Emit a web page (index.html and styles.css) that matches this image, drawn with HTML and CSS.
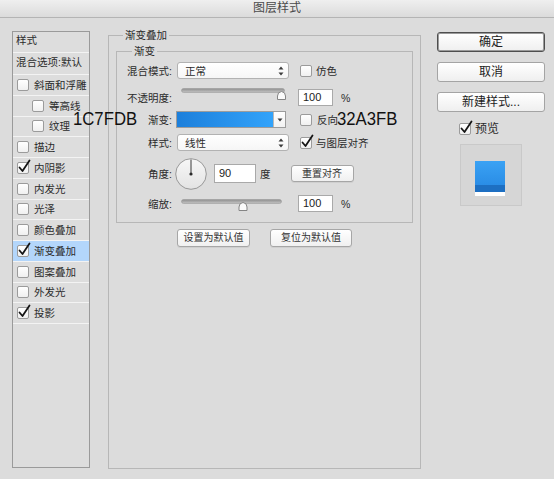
FILE: index.html
```html
<!DOCTYPE html>
<html lang="zh">
<head>
<meta charset="utf-8">
<title>图层样式</title>
<link rel="stylesheet" href="styles.css">
</head>
<body>
<div class="window">
  <div class="titlebar">图层样式</div>
  <div class="main">
    <div class="sidebar">
      <div class="side-head">样式</div>
      <div class="side-blend">混合选项:默认</div>
      <div class="side-row"><span class="cb"></span>斜面和浮雕</div>
      <div class="side-row sub"><span class="cb"></span>等高线</div>
      <div class="side-row sub"><span class="cb"></span>纹理</div>
      <div class="side-row"><span class="cb"></span>描边</div>
      <div class="side-row"><span class="cb on"><svg class="tick" viewBox="0 0 14 14" width="14" height="14"><path d="M2.5 7.5 L5.5 11 L12.5 0.5"/></svg></span>内阴影</div>
      <div class="side-row"><span class="cb"></span>内发光</div>
      <div class="side-row"><span class="cb"></span>光泽</div>
      <div class="side-row"><span class="cb"></span>颜色叠加</div>
      <div class="side-row selected"><span class="cb on"><svg class="tick" viewBox="0 0 14 14" width="14" height="14"><path d="M2.5 7.5 L5.5 11 L12.5 0.5"/></svg></span>渐变叠加</div>
      <div class="side-row"><span class="cb"></span>图案叠加</div>
      <div class="side-row"><span class="cb"></span>外发光</div>
      <div class="side-row"><span class="cb on"><svg class="tick" viewBox="0 0 14 14" width="14" height="14"><path d="M2.5 7.5 L5.5 11 L12.5 0.5"/></svg></span>投影</div>
    </div>

    <fieldset class="group outer">
      <legend>渐变叠加</legend>
      <fieldset class="group inner">
        <legend>渐变</legend>
        <div class="row r1">
          <span class="lbl">混合模式:</span>
          <div class="select s-blend"><span>正常</span><svg class="updown" viewBox="0 0 6 10" width="6" height="10"><path d="M3 0.5 L5.5 3.5 L0.5 3.5 Z M3 9.5 L5.5 6.5 L0.5 6.5 Z"/></svg></div>
          <span class="cb c-after"></span><span class="cbtext">仿色</span>
        </div>
        <div class="row r2">
          <span class="lbl">不透明度:</span>
          <svg class="slider sl1" viewBox="0 0 106 12" width="106" height="12">
            <defs><linearGradient id="trk" x1="0" y1="0" x2="0" y2="1"><stop offset="0" stop-color="#8d8d8d"/><stop offset="1" stop-color="#c4c4c4"/></linearGradient></defs>
            <rect x="0.5" y="0.5" width="103" height="4" rx="2" fill="url(#trk)" stroke="#9a9a9a" stroke-width="0.6"/>
            <path d="M96.5 11.5 L96.5 8 Q96.5 4 100.5 3.5 Q104.5 4 104.5 8 L104.5 11.5 Z" fill="#fbfbfb" stroke="#858585" stroke-width="1"/>
          </svg>
          <div class="num n-op">100</div><span class="unit">%</span>
        </div>
        <div class="row r3">
          <span class="lbl">渐变:</span>
          <div class="grad"><div class="bar"></div><div class="drop"><svg viewBox="0 0 6 4" width="6" height="4"><path d="M0.5 0.5 L5.5 0.5 L3 3.5 Z"/></svg></div></div>
          <span class="cb c-after2"></span><span class="cbtext t2">反向</span>
        </div>
        <div class="row r4">
          <span class="lbl">样式:</span>
          <div class="select s-blend"><span>线性</span><svg class="updown" viewBox="0 0 6 10" width="6" height="10"><path d="M3 0.5 L5.5 3.5 L0.5 3.5 Z M3 9.5 L5.5 6.5 L0.5 6.5 Z"/></svg></div>
          <span class="cb on c-after"><svg class="tick" viewBox="0 0 14 14" width="14" height="14"><path d="M2.5 7.5 L5.5 11 L12.5 0.5"/></svg></span><span class="cbtext">与图层对齐</span>
        </div>
        <div class="row r5">
          <span class="lbl">角度:</span>
          <svg class="dial" viewBox="0 0 32 32" width="32" height="32">
            <defs><linearGradient id="dg" x1="0" y1="0" x2="0" y2="1"><stop offset="0" stop-color="#f7f7f7"/><stop offset="1" stop-color="#e3e3e3"/></linearGradient></defs>
            <circle cx="16" cy="16" r="15.3" fill="url(#dg)" stroke="#8e8e8e" stroke-width="0.9"/>
            <line x1="16" y1="16" x2="16" y2="1.5" stroke="#3a3a3a" stroke-width="1"/>
            <circle cx="16" cy="16" r="1.6" fill="#2a2a2a"/>
          </svg>
          <div class="num n-ang">90</div><span class="unit u-deg">度</span>
          <div class="btn b-reset">重置对齐</div>
        </div>
        <div class="row r6">
          <span class="lbl">缩放:</span>
          <svg class="slider sl2" viewBox="0 0 106 12" width="106" height="12">
            <rect x="0.5" y="0.5" width="100" height="4" rx="2" fill="url(#trk)" stroke="#9a9a9a" stroke-width="0.6"/>
            <path d="M58 11.5 L58 8 Q58 4 62 3.5 Q66 4 66 8 L66 11.5 Z" fill="#fbfbfb" stroke="#858585" stroke-width="1"/>
          </svg>
          <div class="num n-sc">100</div><span class="unit">%</span>
        </div>
      </fieldset>
      <div class="defaults">
        <div class="btn b-def1">设置为默认值</div>
        <div class="btn b-def2">复位为默认值</div>
      </div>
    </fieldset>

    <div class="actions">
      <div class="abtn primary">确定</div>
      <div class="abtn">取消</div>
      <div class="abtn">新建样式...</div>
      <div class="preview-check"><span class="cb on"><svg class="tick" viewBox="0 0 14 14" width="14" height="14"><path d="M2.5 7.5 L5.5 11 L12.5 0.5"/></svg></span><span class="ptext">预览</span></div>
      <div class="preview"><div class="swatch"></div></div>
    </div>
  </div>
  <div class="note n1">1C7FDB</div>
  <div class="note n2">32A3FB</div>
</div>
</body>
</html>
```
FILE: styles.css
```css
html, body {
  margin: 0;
  padding: 0;
}
body {
  width: 554px;
  height: 479px;
  overflow: hidden;
  background: #dcdcdc;
  font-family: "Liberation Sans", "Noto Sans CJK SC", sans-serif;
  font-size: 10.5px;
  color: #2b2b2b;
}
.window {
  position: relative;
  width: 554px;
  height: 479px;
  background: #dcdcdc;
}
.titlebar {
  height: 17px;
  border-bottom: 1px solid #b4b4b4;
  background: linear-gradient(#efefef, #dbdbdb);
  text-align: center;
  font-size: 12px;
  line-height: 17px;
  color: #4a4a4a;
}
.main {
  display: flex;
  align-items: flex-start;
  padding-top: 13px;
}

/* sidebar */
.sidebar {
  margin-left: 12px;
  width: 78px;
  height: 437px;
  box-sizing: border-box;
  border: 1px solid #9a9a9a;
  background: #dddddd;
}
.side-head {
  height: 21px;
  box-sizing: border-box;
  border-bottom: 1px solid #f3f3f3;
  padding: 1px 0 0 3px;
  line-height: 14px;
}
.side-blend {
  height: 22px;
  box-sizing: border-box;
  border-bottom: 1px solid #f3f3f3;
  padding: 2px 0 0 3px;
  line-height: 14px;
}
.side-row {
  height: 20.75px;
  box-sizing: border-box;
  border-bottom: 1px solid #f3f3f3;
  display: flex;
  align-items: center;
  gap: 5px;
  padding-left: 4px;
  line-height: 14px;
}
.side-row.sub {
  padding-left: 19px;
}
.side-row.selected {
  background: #b3d6fb;
}

/* checkbox */
.cb {
  position: relative;
  flex: none;
  display: inline-block;
  width: 12px;
  height: 12px;
  box-sizing: border-box;
  border: 1px solid #9b9b9b;
  border-radius: 2px;
  background: linear-gradient(#ffffff, #f0f0f0);
}
.tick {
  position: absolute;
  left: -1px;
  top: -3px;
  overflow: visible;
}
.tick path {
  fill: none;
  stroke: #151515;
  stroke-width: 1.8;
  stroke-linecap: round;
  stroke-linejoin: round;
}

/* fieldsets */
fieldset.group {
  margin: 0;
  min-width: 0;
  box-sizing: border-box;
  border: 1px solid #b7b7b7;
}
fieldset.group legend {
  padding: 0 2px;
  line-height: 14px;
  font-size: 10.5px;
}
fieldset.outer {
  margin: -3px 0 0 18px;
  width: 313px;
  height: 441px;
  padding: 2px 7px 0 7px;
}
fieldset.outer > legend {
  margin-left: 7px;
}
fieldset.inner {
  width: 297px;
  height: 179px;
  padding: 4px 9px 0 9px;
}
fieldset.inner > legend {
  margin-left: 6px;
}

/* form rows */
.row {
  display: flex;
  align-items: center;
  height: 17px;
  margin-top: 5px;
}
.row.r1 { margin-top: 0; }
.row.r2 { margin-top: 10px; }
.row.r4 { margin-top: 6px; }
.row.r5 { height: 34px; }
.lbl {
  flex: none;
  width: 46px;
  text-align: right;
  white-space: nowrap;
}
.select {
  flex: none;
  width: 112px;
  height: 17px;
  box-sizing: border-box;
  margin-left: 5px;
  border: 1px solid #b2b2b2;
  border-radius: 3px;
  background: linear-gradient(#ffffff, #f6f6f6);
  display: flex;
  align-items: center;
  justify-content: space-between;
  padding: 0 4px 0 7px;
  line-height: 14px;
}
.updown path { fill: #3c3c3c; }
.c-after { margin-left: 11px; }
.c-after2 { margin-left: 14px; }
.cbtext { margin-left: 4px; white-space: nowrap; }
.cbtext.t2 { margin-left: 5px; }

.slider { flex: none; align-self: flex-start; overflow: visible; }
.sl1 { margin: -1px 0 0 9px; }
.sl2 { margin: 4px 0 0 9px; }

.num {
  flex: none;
  height: 17px;
  box-sizing: border-box;
  border: 1px solid #a9a9a9;
  background: #ffffff;
  font-size: 11px;
  line-height: 15px;
  padding-left: 4px;
  color: #222;
}
.n-op { width: 35px; margin-left: 11px; }
.n-sc { width: 35px; margin-left: 11px; }
.n-ang { width: 42px; height: 19px; line-height: 17px; margin-left: 7px; }
.unit { margin-left: 8px; font-size: 10.5px; }
.u-deg { margin-left: 4px; }

.grad {
  flex: none;
  margin-left: 4px;
  width: 110px;
  height: 17px;
  box-sizing: border-box;
  border: 1px solid #9c9c9c;
  display: flex;
  background: #fff;
}
.grad .bar {
  flex: 1;
  background: linear-gradient(90deg, #1c7fdb, #32a3fb);
}
.grad .drop {
  flex: none;
  width: 11px;
  border-left: 1px solid #b9b9b9;
  display: flex;
  align-items: center;
  justify-content: center;
  background: linear-gradient(#ffffff, #f2f2f2);
}
.grad .drop path { fill: #3c3c3c; }

.dial { flex: none; align-self: flex-end; margin-left: 3px; }

.btn {
  flex: none;
  height: 18px;
  box-sizing: border-box;
  border: 1px solid #a6a6a6;
  border-radius: 3px;
  background: linear-gradient(#ffffff, #f0f0f0);
  box-shadow: 0 1px 0 rgba(0, 0, 0, 0.06);
  font-size: 10px;
  line-height: 16px;
  text-align: center;
  color: #333;
}
.b-reset { width: 63px; height: 17px; line-height: 15px; margin-left: 20px; }
.defaults {
  display: flex;
  justify-content: center;
  gap: 20px;
  margin-top: 6px;
}
.b-def1 { width: 73px; }
.b-def2 { width: 82px; }

/* right column */
.actions {
  margin: 1px 0 0 16px;
  width: 108px;
  display: flex;
  flex-direction: column;
}
.abtn {
  height: 20px;
  box-sizing: border-box;
  margin-bottom: 10px;
  border: 1px solid #a4a4a4;
  border-radius: 3px;
  background: linear-gradient(#ffffff, #efefef);
  font-size: 12px;
  line-height: 18px;
  text-align: center;
  color: #222;
}
.abtn.primary {
  border: 1px solid #4e4e4e;
  box-shadow: inset 0 0 0 1px #9a9a9a;
}
.preview-check {
  display: flex;
  align-items: center;
  margin: 1px 0 0 22px;
  height: 12px;
}
.ptext { margin-left: 4px; font-size: 12px; line-height: 14px; }
.preview {
  margin: 9px 0 0 23px;
  width: 62px;
  height: 62px;
  box-sizing: border-box;
  border: 1px solid #c9c9c9;
  background: #d6d6d6;
  padding: 16px 0 0 14px;
}
.swatch {
  width: 30px;
  height: 35px;
  background: linear-gradient(#3aa2f4 0, #2a8de6 24px, #1d6fc2 24px, #1d6fc2 31px, #ffffff 31px);
}

/* annotations over the screenshot */
.note {
  position: absolute;
  font-family: "Liberation Sans", sans-serif;
  font-size: 19px;
  line-height: 19px;
  color: #111;
  transform: scaleX(0.88);
  transform-origin: left top;
}
.n1 { left: 73px; top: 109px; }
.n2 { left: 337px; top: 109px; }
```
